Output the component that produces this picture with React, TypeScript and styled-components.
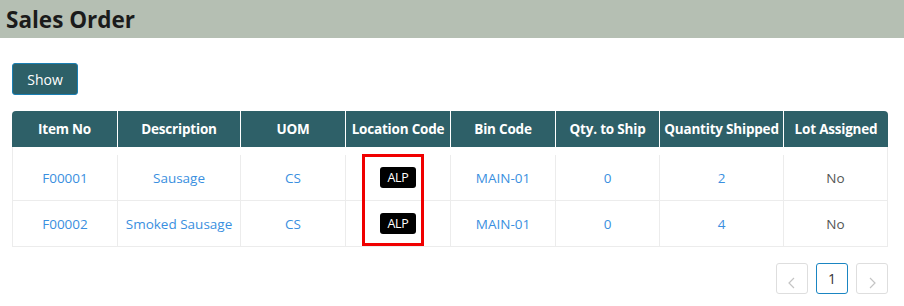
import React from "react";
import styled, { createGlobalStyle } from "styled-components";

const GlobalStyle = createGlobalStyle`
  html, body { margin: 0; padding: 0; background: #ffffff; }
  body { font-family: "Open Sans", "Noto Sans", Arial, sans-serif; color: #333; }
`;

const COLS = "105px 123px 105px 105px 105px 104px 124px 105px";

const TitleBar = styled.header`
  height: 38px;
  background: #b5bfb3;
  display: flex;
  align-items: center;
  padding-left: 6px;
`;

const Title = styled.h1`
  margin: 0;
  font-size: 22.5px;
  font-weight: 700;
  color: #1b1b1b;
`;

const Content = styled.main`
  padding: 25px 12px 0 12px;
  width: 876px;
`;

const ShowButton = styled.button`
  width: 66px;
  height: 32px;
  background: #2d6068;
  color: #ffffff;
  border: 1px solid #1a7fb3;
  border-radius: 3px;
  font-family: inherit;
  font-size: 14px;
  padding: 0;
  cursor: pointer;
`;

const Grid = styled.div`
  margin-top: 16px;
`;

const HeadRow = styled.div`
  display: grid;
  grid-template-columns: ${COLS};
  height: 36px;
  background: #2e6068;
  border-radius: 4px 4px 0 0;
`;

const HeadCell = styled.div<{ $first?: boolean }>`
  display: flex;
  align-items: center;
  justify-content: center;
  color: #ffffff;
  font-weight: 700;
  font-size: 13.5px;
  white-space: nowrap;
  letter-spacing: -0.2px;
  border-left: ${(p) => (p.$first ? "none" : "1px solid #ffffff")};
`;

const Body = styled.div`
  border: 1px solid #ececec;
  border-top: none;
  padding-top: 8px;
`;

const BodyRow = styled.div<{ $last?: boolean }>`
  display: grid;
  grid-template-columns: 104px 123px 105px 105px 105px 104px 124px 104px;
  height: 45px;
  border-bottom: ${(p) => (p.$last ? "none" : "1px solid #ececec")};
`;

const Cell = styled.div<{ $first?: boolean; $muted?: boolean }>`
  position: relative;
  display: flex;
  align-items: center;
  justify-content: center;
  font-size: 13.5px;
  white-space: nowrap;
  color: ${(p) => (p.$muted ? "#555555" : "#3a8fe0")};
  border-left: ${(p) => (p.$first ? "none" : "1px solid #ececec")};
`;

const Badge = styled.span`
  display: inline-flex;
  align-items: center;
  justify-content: center;
  width: 36px;
  height: 21px;
  background: #000000;
  color: #ffffff;
  border-radius: 3px;
  font-size: 12.5px;
  letter-spacing: -0.3px;
`;

const Highlight = styled.div`
  position: absolute;
  left: 16px;
  top: -1px;
  width: 56px;
  height: 86px;
  border: 3px solid #f00000;
  pointer-events: none;
`;

const Pager = styled.nav`
  display: flex;
  justify-content: flex-end;
  gap: 8px;
  margin-top: 16px;
`;

const PageButton = styled.button<{ $active?: boolean }>`
  width: 32px;
  height: 31px;
  padding: 0;
  background: #ffffff;
  border: 1px solid ${(p) => (p.$active ? "#1a85c2" : "#dedede")};
  border-radius: 3px;
  font-family: inherit;
  font-size: 14px;
  color: ${(p) => (p.$active ? "#333333" : "#c4c4c4")};
  display: flex;
  align-items: center;
  justify-content: center;
`;

const Chevron = ({ dir }: { dir: "left" | "right" }) => (
  <svg width="10" height="12" viewBox="0 0 10 12" style={{ marginTop: 8 }}>
    <path
      d={dir === "left" ? "M7 1 L2 6 L7 11" : "M3 1 L8 6 L3 11"}
      fill="none"
      stroke="#c4c4c4"
      strokeWidth="1.2"
    />
  </svg>
);

const headers = [
  "Item No",
  "Description",
  "UOM",
  "Location Code",
  "Bin Code",
  "Qty. to Ship",
  "Quantity Shipped",
  "Lot Assigned",
];

const rows = [
  { item: "F00001", desc: "Sausage", uom: "CS", loc: "ALP", bin: "MAIN-01", toShip: "0", shipped: "2", lot: "No" },
  { item: "F00002", desc: "Smoked Sausage", uom: "CS", loc: "ALP", bin: "MAIN-01", toShip: "0", shipped: "4", lot: "No" },
];

export default function App() {
  return (
    <>
      <GlobalStyle />
      <TitleBar>
        <Title>Sales Order</Title>
      </TitleBar>
      <Content>
        <ShowButton>Show</ShowButton>
        <Grid>
          <HeadRow>
            {headers.map((h, i) => (
              <HeadCell key={h} $first={i === 0}>
                {h}
              </HeadCell>
            ))}
          </HeadRow>
          <Body>
            {rows.map((r, i) => (
              <BodyRow key={r.item} $last={i === rows.length - 1}>
                <Cell $first>{r.item}</Cell>
                <Cell>{r.desc}</Cell>
                <Cell>{r.uom}</Cell>
                <Cell>
                  {i === 0 && <Highlight />}
                  <Badge>{r.loc}</Badge>
                </Cell>
                <Cell>{r.bin}</Cell>
                <Cell>{r.toShip}</Cell>
                <Cell>{r.shipped}</Cell>
                <Cell $muted>{r.lot}</Cell>
              </BodyRow>
            ))}
          </Body>
        </Grid>
        <Pager>
          <PageButton>
            <Chevron dir="left" />
          </PageButton>
          <PageButton $active>1</PageButton>
          <PageButton>
            <Chevron dir="right" />
          </PageButton>
        </Pager>
      </Content>
    </>
  );
}
